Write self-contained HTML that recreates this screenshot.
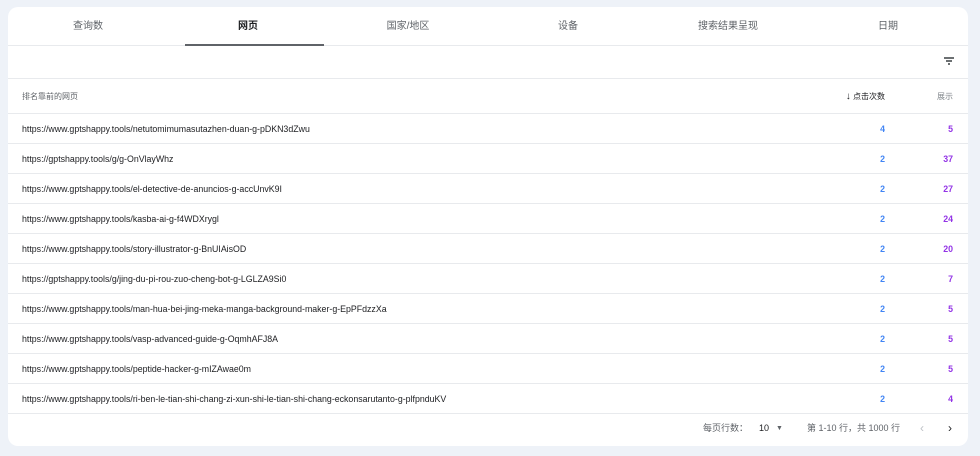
<!DOCTYPE html>
<html><head><meta charset="utf-8"><style>
*{margin:0;padding:0;box-sizing:border-box}
body{width:980px;height:456px;background:#eef2f8;font-family:"Liberation Sans","Noto Sans CJK SC",sans-serif;position:relative;overflow:hidden}
.card{position:absolute;left:8px;top:7px;width:960px;height:439px;background:#fff;border-radius:10px;overflow:hidden}
.tabs{height:39px;border-bottom:1px solid #e8eaed;display:flex;position:relative}
.tab{flex:1;text-align:center;font-size:10px;color:#5f6368;line-height:40px}
.tab.on{color:#202124;font-weight:bold}
.ul{position:absolute;left:177px;top:37px;width:139px;height:2px;background:#5f6368}
.frow{height:33px;border-bottom:1px solid #e8eaed;position:relative}
.row{height:30px;border-bottom:1px solid #e8eaed;position:relative;font-size:8.8px;color:#202124;line-height:30px}
.hdr{height:35px;line-height:35px;font-size:8px;color:#5f6368}
.u{position:absolute;left:14px}
.c{position:absolute;right:83px;color:#4285f4;font-weight:bold}
.i{position:absolute;right:15px;color:#9334e6;font-weight:bold}
.hdr .c{color:#202124;font-weight:normal}.hdr .i{color:#80868b;font-weight:normal}
.foot{position:absolute;top:404px;left:0;right:0;height:35px;font-size:9px;color:#5f6368;line-height:35px}
</style></head><body><div class="card">
<div class="tabs"><div class="tab">查询数</div><div class="tab on">网页</div><div class="tab">国家/地区</div><div class="tab">设备</div><div class="tab">搜索结果呈现</div><div class="tab">日期</div><div class="ul"></div></div>
<div class="frow"><svg style="position:absolute;left:935px;top:10px" width="12" height="10" viewBox="0 0 12 10"><path d="M1 2h10M3 5h6M5 8h2" stroke="#3c4043" stroke-width="1.6"/></svg></div>
<div class="row hdr"><span class="u">排名靠前的网页</span><span class="c"><b style="font-size:10px">↓</b> 点击次数</span><span class="i">展示</span></div>
<div class="row"><span class="u">https://www.gptshappy.tools/netutomimumasutazhen-duan-g-pDKN3dZwu</span><span class="c">4</span><span class="i">5</span></div>
<div class="row"><span class="u">https://gptshappy.tools/g/g-OnVlayWhz</span><span class="c">2</span><span class="i">37</span></div>
<div class="row"><span class="u">https://www.gptshappy.tools/el-detective-de-anuncios-g-accUnvK9I</span><span class="c">2</span><span class="i">27</span></div>
<div class="row"><span class="u">https://www.gptshappy.tools/kasba-ai-g-f4WDXrygl</span><span class="c">2</span><span class="i">24</span></div>
<div class="row"><span class="u">https://www.gptshappy.tools/story-illustrator-g-BnUIAisOD</span><span class="c">2</span><span class="i">20</span></div>
<div class="row"><span class="u">https://gptshappy.tools/g/jing-du-pi-rou-zuo-cheng-bot-g-LGLZA9Si0</span><span class="c">2</span><span class="i">7</span></div>
<div class="row"><span class="u">https://www.gptshappy.tools/man-hua-bei-jing-meka-manga-background-maker-g-EpPFdzzXa</span><span class="c">2</span><span class="i">5</span></div>
<div class="row"><span class="u">https://www.gptshappy.tools/vasp-advanced-guide-g-OqmhAFJ8A</span><span class="c">2</span><span class="i">5</span></div>
<div class="row"><span class="u">https://www.gptshappy.tools/peptide-hacker-g-mIZAwae0m</span><span class="c">2</span><span class="i">5</span></div>
<div class="row"><span class="u">https://www.gptshappy.tools/ri-ben-le-tian-shi-chang-zi-xun-shi-le-tian-shi-chang-eckonsarutanto-g-plfpnduKV</span><span class="c">2</span><span class="i">4</span></div>
<div class="foot"><span style="position:absolute;left:695px">每页行数：</span><span style="position:absolute;left:751px;color:#202124">10</span><span style="position:absolute;left:768px;font-size:7px">▼</span><span style="position:absolute;left:799px">第 1-10 行，共 1000 行</span><span style="position:absolute;left:912px;color:#bdc1c6;font-size:12px">‹</span><span style="position:absolute;left:940px;color:#202124;font-size:12px">›</span></div>
</div></body></html>
